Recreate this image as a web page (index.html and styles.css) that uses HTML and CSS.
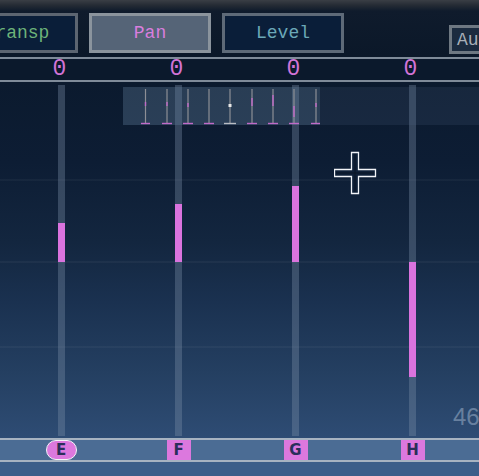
FILE: index.html
```html
<!DOCTYPE html>
<html>
<head>
<meta charset="utf-8">
<link rel="stylesheet" href="styles.css">
</head>
<body>
<div class="app">
  <div class="topbar">
    <div class="btn transp">Transp</div>
    <div class="btn pan">Pan</div>
    <div class="btn level">Level</div>
    <div class="btn au">Auto</div>
  </div>
  <div class="rule"></div>
  <div class="values">
    <div class="val">0</div>
    <div class="val">0</div>
    <div class="val">0</div>
    <div class="val">0</div>
  </div>
  <div class="rule"></div>
  <div class="main">
    <div class="channels">
      <div class="chan"><div class="track"><div class="bar" style="top:141px;height:39px"></div></div></div>
      <div class="chan"><div class="track"><div class="bar" style="top:122px;height:58px"></div></div></div>
      <div class="chan"><div class="track"><div class="bar" style="top:104px;height:76px"></div></div></div>
      <div class="chan"><div class="track"><div class="bar" style="top:180px;height:115px"></div></div></div>
    </div>
    <div class="mini">
      <svg class="mini-ticks" width="197" height="38" viewBox="0 0 197 38">
        <g stroke="#8d8f95" stroke-width="1.2">
          <line x1="22.5" y1="2" x2="22.5" y2="36"/>
          <line x1="44" y1="2" x2="44" y2="36"/>
          <line x1="65" y1="2" x2="65" y2="36"/>
          <line x1="86" y1="2" x2="86" y2="36"/>
          <line x1="107" y1="2" x2="107" y2="36"/>
          <line x1="129" y1="2" x2="129" y2="36"/>
          <line x1="150" y1="2" x2="150" y2="36"/>
          <line x1="171" y1="2" x2="171" y2="36"/>
          <line x1="193" y1="2" x2="193" y2="36"/>
        </g>
        <g stroke="#c06ac8" stroke-width="1.4">
          <line x1="22.5" y1="15" x2="22.5" y2="19"/>
          <line x1="44" y1="15" x2="44" y2="19"/>
          <line x1="65" y1="16" x2="65" y2="20"/>
          <line x1="129" y1="11" x2="129" y2="19"/>
          <line x1="150" y1="8" x2="150" y2="19"/>
          <line x1="171" y1="19" x2="171" y2="30"/>
          <line x1="193" y1="16" x2="193" y2="20"/>
          <line x1="18" y1="36.5" x2="27" y2="36.5"/>
          <line x1="39" y1="36.5" x2="49" y2="36.5"/>
          <line x1="60" y1="36.5" x2="70" y2="36.5"/>
          <line x1="81" y1="36.5" x2="91" y2="36.5"/>
          <line x1="124" y1="36.5" x2="134" y2="36.5"/>
          <line x1="145" y1="36.5" x2="155" y2="36.5"/>
          <line x1="166" y1="36.5" x2="176" y2="36.5"/>
          <line x1="188" y1="36.5" x2="197" y2="36.5"/>
        </g>
        <rect x="105.5" y="17" width="3" height="3" fill="#e8e8e8"/>
        <line x1="101" y1="36.5" x2="113" y2="36.5" stroke="#b8bcc2" stroke-width="1.4"/>
      </svg>
    </div>
    <svg class="cross" width="44" height="44" viewBox="0 0 44 44">
      <path d="M17.5 1.5 H24.5 V18.5 H41.5 V25.5 H24.5 V42.5 H17.5 V25.5 H0.5 V18.5 H17.5 Z" fill="#0f2038" stroke="#f2f4f8" stroke-width="1.3"/>
      <path d="M21 3 V41 M2 22 H40" stroke="#0a1424" stroke-width="1"/>
    </svg>
    <div class="num">46</div>
  </div>
  <div class="rule light"></div>
  <div class="labels">
    <div class="lab"><span class="chip pill">E</span></div>
    <div class="lab"><span class="chip">F</span></div>
    <div class="lab"><span class="chip">G</span></div>
    <div class="lab"><span class="chip">H</span></div>
  </div>
  <div class="rule light"></div>
  <div class="footer"></div>
</div>
</body>
</html>
```

FILE: styles.css
```css
html, body {
  margin: 0;
  padding: 0;
}
body {
  width: 479px;
  height: 476px;
  overflow: hidden;
  background: #3c5e89;
  font-family: "Liberation Mono", "DejaVu Sans Mono", monospace;
}
.app {
  display: flex;
  flex-direction: column;
  width: 479px;
  height: 476px;
  overflow: hidden;
}
.topbar {
  height: 57px;
  flex: none;
  display: flex;
  align-items: flex-start;
  gap: 11px;
  margin-left: -44px;
  padding-top: 13px;
  box-sizing: border-box;
  background: linear-gradient(#3a3e45 0px, #262c35 5px, #0f1b2c 11px, #0b1829 57px);
  overflow: visible;
}
.btn {
  flex: none;
  width: 122px;
  height: 40px;
  box-sizing: border-box;
  border: 3px solid #5c6571;
  background: #0a1e39;
  display: flex;
  align-items: center;
  justify-content: center;
  font-size: 18px;
  letter-spacing: 0;
}
.transp {
  color: #6db37a;
}
.pan {
  background: #556477;
  border-color: #8b949d;
  color: #d97ede;
}
.level {
  color: #6aa8b8;
  border-color: #5e6a78;
}
.au {
  width: 80px;
  height: 29px;
  margin-top: 12px;
  margin-left: 94px;
  justify-content: flex-start;
  padding-left: 5px;
  background: #1b2b3f;
  border-color: #6e7882;
  color: #a8afb8;
  font-size: 18px;
}
.rule {
  height: 2px;
  flex: none;
  background: #7f8b99;
}
.rule.light {
  background: #a7b3c1;
}
.values {
  height: 21px;
  flex: none;
  display: grid;
  grid-template-columns: repeat(4, 117px);
  padding-left: 3px;
  background: #0b192c;
}
.val {
  display: flex;
  align-items: center;
  justify-content: center;
  padding-right: 4px;
  color: #d173d6;
  font-size: 23px;
  line-height: 21px;
}
.main {
  position: relative;
  height: 356px;
  flex: none;
  background:
    linear-gradient(rgba(255,255,255,0.035), rgba(255,255,255,0.035)) 0 97px / 100% 2px no-repeat,
    linear-gradient(rgba(255,255,255,0.04), rgba(255,255,255,0.04)) 0 179px / 100% 2px no-repeat,
    linear-gradient(rgba(255,255,255,0.035), rgba(255,255,255,0.035)) 0 264px / 100% 2px no-repeat,
    linear-gradient(#0b1a2e 0px, #0d1d34 80px, #13263f 160px, #1a3150 220px, #243f61 290px, #2e4c74 356px);
}
.channels {
  display: grid;
  grid-template-columns: repeat(4, 117px);
  padding-left: 3px;
  height: 100%;
  box-sizing: border-box;
  padding-top: 3px;
  padding-bottom: 2px;
}
.chan {
  display: flex;
  justify-content: center;
}
.track {
  position: relative;
  width: 7px;
  height: 100%;
  background: rgba(125, 145, 170, 0.36);
}
.bar {
  position: absolute;
  left: 0;
  width: 7px;
  margin-top: -3px;
  background: #da73de;
}
.mini {
  position: absolute;
  left: 123px;
  top: 5px;
  width: 356px;
  height: 38px;
  background: rgba(90, 115, 140, 0.16);
}
.mini-ticks {
  display: block;
  background: rgba(110, 140, 170, 0.22);
}
.cross {
  position: absolute;
  left: 334px;
  top: 69px;
}
.num {
  position: absolute;
  left: 453px;
  top: 321px;
  font-family: "Liberation Sans", Arial, sans-serif;
  font-size: 24px;
  color: #6f87a5;
  opacity: 0.9;
}
.labels {
  height: 20px;
  flex: none;
  display: grid;
  grid-template-columns: repeat(4, 117px);
  padding-left: 3px;
  background: #4b6c94;
}
.lab {
  display: flex;
  justify-content: center;
}
.chip {
  width: 24px;
  height: 20px;
  background: #dc78de;
  color: #2b2e5a;
  font-family: "DejaVu Sans", sans-serif;
  font-weight: bold;
  font-size: 15px;
  line-height: 20px;
  text-align: center;
}
.pill {
  width: 29px;
  height: 18px;
  line-height: 18px;
  border: 1px solid #f4f4f8;
  border-radius: 10px;
  margin-right: 1px;
}
.footer {
  flex: 1;
  background: #3c5e89;
}
```
